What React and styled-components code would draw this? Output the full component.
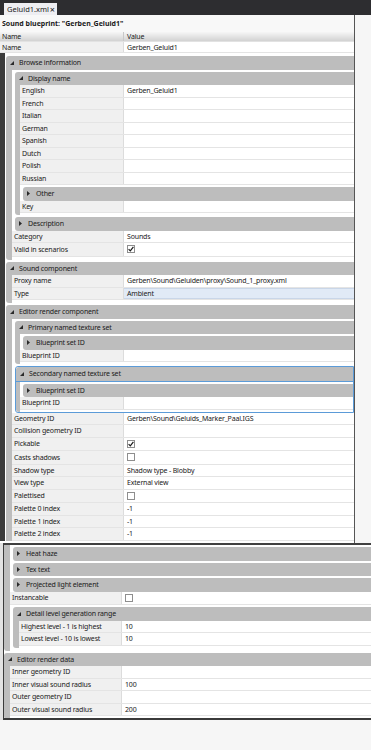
import React from 'react';
import styled, { createGlobalStyle } from 'styled-components';

const GlobalStyle = createGlobalStyle`
  html, body { margin: 0; padding: 0; }
  body {
    background: #f6f6f6;
    font-family: 'Noto Sans', 'Open Sans', sans-serif;
    font-size: 7px;
    letter-spacing: -0.17px;
    color: #1a1a1a;
  }
`;

const GRAY = '#bdbdbd';

const Screen = styled.div`
  width: 371px;
  height: 750px;
  overflow: hidden;
  background: #f6f6f6;
`;

const TabStrip = styled.div`
  height: 15px;
  background: #2d2d30;
  padding-left: 4px;
  display: flex;
  align-items: flex-end;
  box-sizing: border-box;
`;

const Tab = styled.div`
  width: 53px;
  height: 12px;
  background: #eeeef2;
  display: flex;
  align-items: center;
  justify-content: space-between;
  padding: 0 2px 0 3px;
  box-sizing: border-box;
  font-size: 7.5px;
  letter-spacing: 0;
`;

const TabClose = styled.span`
  font-size: 9px;
  line-height: 1;
`;

const TopWindow = styled.div`
  width: 355px;
  height: 528px;
  overflow: hidden;
  box-sizing: border-box;
  border-right: 1px solid #555;
  background: #fff;
`;

const Title = styled.div`
  height: 17px;
  display: flex;
  align-items: center;
  padding-left: 2px;
  font-weight: bold;
  letter-spacing: 0;
  background: #f8f8f8;
`;

const GridHeader = styled.div`
  display: flex;
  height: 10px;
  background: linear-gradient(#f6f6f6, #d2d2d2);
  border-bottom: 1px solid #e2e2e2;
  box-sizing: border-box;
`;

const HeadCell = styled.div`
  width: ${p => (p.$w ? `${p.$w}px` : 'auto')};
  flex: ${p => (p.$w ? 'none' : 1)};
  box-sizing: border-box;
  padding-left: ${p => (p.$w ? 2 : 3)}px;
  display: flex;
  align-items: center;
  border-right: ${p => (p.$w ? '1px solid #c8c8c8' : 'none')};
`;

const TopSections = styled.div`
  border-left: 5px solid #3b3b3b;
  padding-left: 1px;
  padding-top: 1px;
  background: #fff;
`;

const BottomWrap = styled.div`
  display: flex;
  height: 177px;
  background: #e2e2e2;
`;

const BottomPanel = styled.div`
  flex: 1;
  margin-left: 3px;
  border-left: 1px solid #3a3a3a;
  border-top: 2px solid #404040;
  border-bottom: 2px solid #3a3a3a;
  background: #fff;
  overflow: hidden;
`;

const Row = styled.div`
  display: flex;
  height: ${p => p.$h}px;
  box-sizing: border-box;
  border-bottom: 1px solid #e4e4e4;
`;

const NameCell = styled.div`
  width: ${p => p.$w}px;
  flex: none;
  box-sizing: border-box;
  padding-left: 2px;
  background: #f0f0f0;
  border-right: 1px solid #dcdcdc;
  display: flex;
  align-items: center;
  white-space: nowrap;
  overflow: hidden;
`;

const ValueCell = styled.div`
  flex: 1;
  display: flex;
  align-items: center;
  padding-left: 3px;
  background: ${p => (p.$selected ? '#e1eaf6' : '#fff')};
  box-shadow: ${p => (p.$selected ? 'inset 0 1px 0 #c9d6e8, inset 0 -1px 0 #c9d6e8' : 'none')};
  white-space: nowrap;
  overflow: hidden;
`;

const CheckBox = styled.span`
  width: 8px;
  height: 8px;
  box-sizing: border-box;
  border: 1px solid #8e8e8e;
  background: #fff;
  display: inline-flex;
  align-items: center;
  justify-content: center;
`;

const CatBox = styled.div`
  margin-top: ${p => (p.$headless ? 0 : 2)}px;
  margin-left: ${p => p.$indent}px;
  border: ${p => (p.$focused ? '1px solid #5b9bd8' : 'none')};
  border-radius: 3px 0 0 3px;
`;

const CatHeader = styled.div`
  height: 13.5px;
  display: flex;
  align-items: center;
  background: ${GRAY};
  border-bottom: ${p => (p.$focused ? '1px solid #5b9bd8' : 'none')};
  border-radius: ${p => (p.$open ? '3px 0 0 0' : '3px 0 0 3px')};
  white-space: nowrap;
`;

const ArrowSlot = styled.span`
  width: 13px;
  flex: none;
  box-sizing: border-box;
  padding-left: 4px;
  display: flex;
  align-items: center;
`;

const CatBody = styled.div`
  display: flex;
`;

const Gutter = styled.div`
  width: ${p => p.$w}px;
  flex: none;
  background: ${GRAY};
  border-radius: ${p => (p.$cut ? 0 : '0 0 0 3px')};
`;

const CatContent = styled.div`
  flex: 1;
  min-width: 0;
  padding-bottom: ${p => p.$pad}px;
  background: #fff;
`;

const Arrow = ({ open }) =>
  open ? (
    <svg width="4" height="4" viewBox="0 0 4 4">
      <path d="M4 0V4H0Z" fill="#2a2a2a" />
    </svg>
  ) : (
    <svg width="3" height="5" viewBox="0 0 3 5">
      <path d="M0 0L3 2.5L0 5Z" fill="#2a2a2a" />
    </svg>
  );

const Check = () => (
  <svg width="6" height="6" viewBox="0 0 6 6">
    <path d="M0.6 3.1L2.3 4.8L5.4 0.8" fill="none" stroke="#1a1a1a" strokeWidth="1.2" />
  </svg>
);

const r = (name, value, extra = {}) => ({ name, value, ...extra });
const c = (cat, items, extra = {}) => ({ cat, items, open: !!items, ...extra });

const topTree = [
  c('Browse information', [
    c('Display name', [
      r('English', 'Gerben_Geluid1'),
      r('French'),
      r('Italian'),
      r('German'),
      r('Spanish'),
      r('Dutch'),
      r('Polish'),
      r('Russian'),
      c('Other'),
      r('Key'),
    ]),
    c('Description'),
    r('Category', 'Sounds'),
    r('Valid in scenarios', null, { check: true }),
  ]),
  c('Sound component', [
    r('Proxy name', 'Gerben\\Sound\\Geluiden\\proxy\\Sound_1_proxy.xml'),
    r('Type', 'Ambient', { selected: true }),
  ]),
  c(
    'Editor render component',
    [
      c('Primary named texture set', [c('Blueprint set ID'), r('Blueprint ID')]),
      c('Secondary named texture set', [c('Blueprint set ID'), r('Blueprint ID')], { focused: true }),
      r('Geometry ID', 'Gerben\\Sound\\Geluids_Marker_Paal.IGS'),
      r('Collision geometry ID'),
      r('Pickable', null, { check: true }),
      r('Casts shadows', null, { check: false }),
      r('Shadow type', 'Shadow type - Blobby'),
      r('View type', 'External view'),
      r('Palettised', null, { check: false }),
      r('Palette 0 index', '-1'),
      r('Palette 1 index', '-1'),
      r('Palette 2 index', '-1'),
    ],
    { cut: true }
  ),
];

const bottomTree = [
  c(
    null,
    [
      c('Heat haze'),
      c('Tex text'),
      c('Projected light element'),
      r('Instancable', null, { check: false }),
      c('Detail level generation range', [
        r('Highest level - 1 is highest', '10'),
        r('Lowest level - 10 is lowest', '10'),
      ]),
    ],
    { headless: true }
  ),
  c('Editor render data', [
    r('Inner geometry ID'),
    r('Inner visual sound radius', '100'),
    r('Outer geometry ID'),
    r('Outer visual sound radius', '200'),
  ]),
];

function PropRow({ node, left, split }) {
  const hasCheck = node.check !== undefined;
  return (
    <Row $h={hasCheck ? 13.5 : 12.5}>
      <NameCell $w={split - left}>{node.name}</NameCell>
      <ValueCell $selected={node.selected}>
        {hasCheck ? <CheckBox>{node.check && <Check />}</CheckBox> : node.value}
      </ValueCell>
    </Row>
  );
}

function Category({ node, left, split, level, gutters }) {
  const indent = level === 1 ? 0 : 3;
  const border = node.focused ? 1 : 0;
  const gutter = (level === 1 ? gutters[0] : gutters[1]) - border;
  const rowLeft = left + indent + border + gutter;
  return (
    <CatBox $indent={indent} $focused={node.focused} $headless={node.headless}>
      {!node.headless && (
        <CatHeader $open={node.open} $focused={node.focused}>
          <ArrowSlot>
            <Arrow open={node.open} />
          </ArrowSlot>
          {node.cat}
        </CatHeader>
      )}
      {node.open && (
        <CatBody>
          <Gutter $w={gutter} $cut={node.cut} />
          <CatContent $pad={node.cut ? 0 : level === 1 ? 3 : 2}>
            <Tree items={node.items} left={rowLeft} split={split} level={level + 1} gutters={gutters} />
          </CatContent>
        </CatBody>
      )}
    </CatBox>
  );
}

function Tree({ items, left, split, level, gutters }) {
  return items.map((n, i) =>
    n.items !== undefined || n.cat ? (
      <Category key={i} node={n} left={left} split={split} level={level} gutters={gutters} />
    ) : (
      <PropRow key={i} node={n} left={left} split={split} />
    )
  );
}

export default function App() {
  return (
    <Screen>
      <GlobalStyle />
      <TabStrip>
        <Tab>
          <span>Geluid1.xml</span>
          <TabClose>×</TabClose>
        </Tab>
      </TabStrip>
      <TopWindow>
        <Title>Sound blueprint: "Gerben_Geluid1"</Title>
        <GridHeader>
          <HeadCell $w={124}>Name</HeadCell>
          <HeadCell>Value</HeadCell>
        </GridHeader>
        <Row $h={11}>
          <NameCell $w={124}>Name</NameCell>
          <ValueCell>Gerben_Geluid1</ValueCell>
        </Row>
        <TopSections>
          <Tree items={topTree} left={6} split={124} level={1} gutters={[6, 5]} />
        </TopSections>
      </TopWindow>
      <BottomWrap>
        <BottomPanel>
          <Tree items={bottomTree} left={4} split={122} level={1} gutters={[6, 6]} />
        </BottomPanel>
      </BottomWrap>
    </Screen>
  );
}
